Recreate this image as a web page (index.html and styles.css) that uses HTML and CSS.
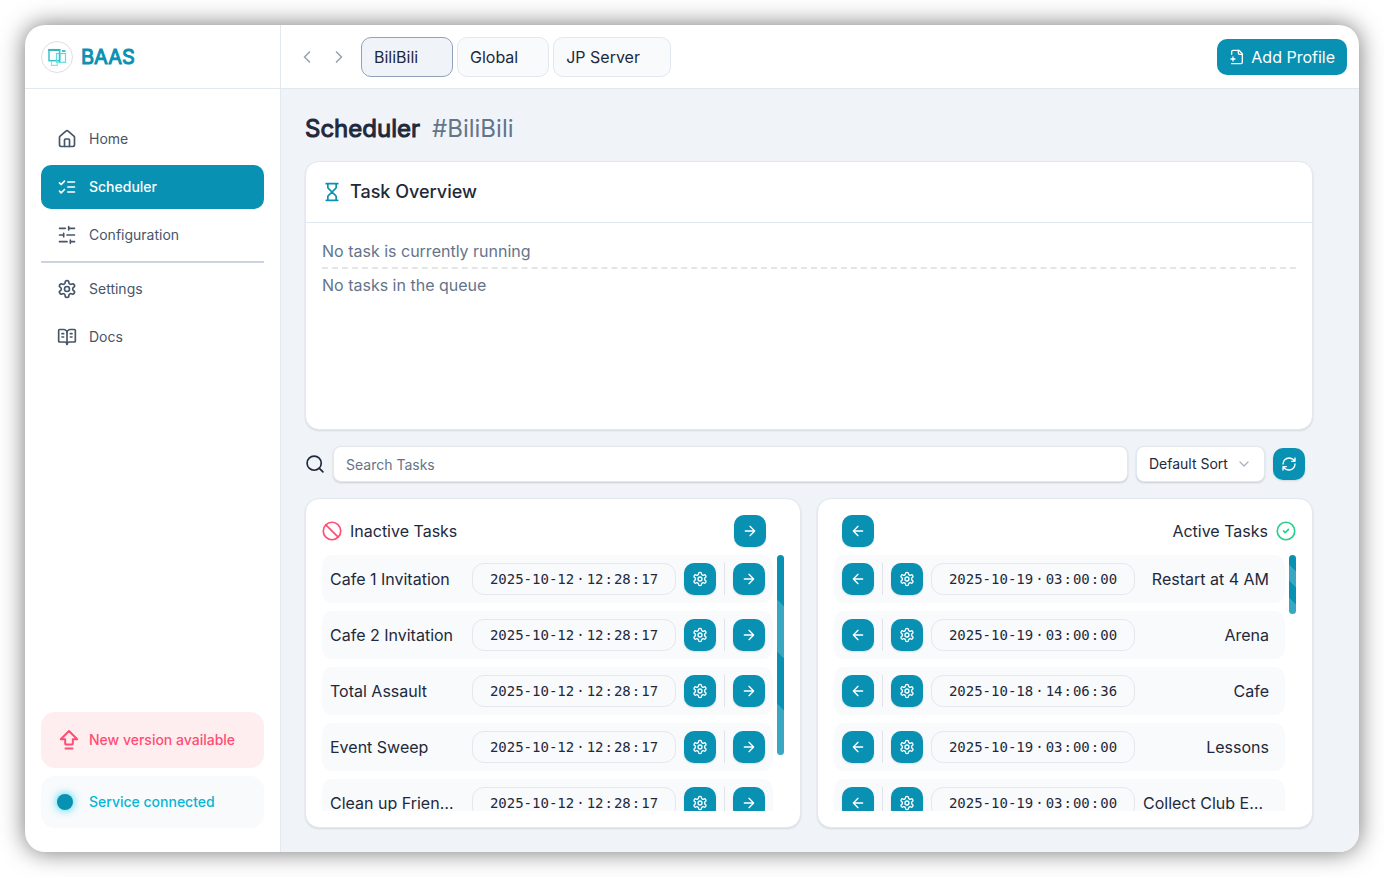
FILE: index.html
```html
<!DOCTYPE html>
<html lang="en">
<head>
<meta charset="utf-8">
<meta name="viewport" content="width=device-width, initial-scale=1">
<title>BAAS</title>
<link rel="stylesheet" href="styles.css">
</head>
<body>
<svg class="sprite" aria-hidden="true">
  <symbol id="gear" viewBox="0 0 24 24"><path d="M12.22 2h-.44a2 2 0 0 0-2 2v.18a2 2 0 0 1-1 1.73l-.43.25a2 2 0 0 1-2 0l-.15-.08a2 2 0 0 0-2.73.73l-.22.38a2 2 0 0 0 .73 2.73l.15.1a2 2 0 0 1 1 1.72v.51a2 2 0 0 1-1 1.74l-.15.09a2 2 0 0 0-.73 2.73l.22.38a2 2 0 0 0 2.73.73l.15-.08a2 2 0 0 1 2 0l.43.25a2 2 0 0 1 1 1.73V20a2 2 0 0 0 2 2h.44a2 2 0 0 0 2-2v-.18a2 2 0 0 1 1-1.73l.43-.25a2 2 0 0 1 2 0l.15.08a2 2 0 0 0 2.73-.73l.22-.39a2 2 0 0 0-.73-2.73l-.15-.08a2 2 0 0 1-1-1.74v-.5a2 2 0 0 1 1-1.74l.15-.09a2 2 0 0 0 .73-2.73l-.22-.38a2 2 0 0 0-2.73-.73l-.15.08a2 2 0 0 1-2 0l-.43-.25a2 2 0 0 1-1-1.73V4a2 2 0 0 0-2-2z"/><circle cx="12" cy="12" r="3"/></symbol>
  <symbol id="right" viewBox="0 0 24 24"><path d="M5 12h14M12 5l7 7-7 7"/></symbol>
  <symbol id="left" viewBox="0 0 24 24"><path d="M19 12H5M12 19l-7-7 7-7"/></symbol>
</svg>
<div class="window">
  <aside class="sidebar">
    <div class="brand">
      <svg class="logo" viewBox="0 0 32 32" aria-hidden="true">
        <circle cx="16" cy="16" r="15.5" fill="#fff" stroke="#dcdfe3"/>
        <g fill="none">
          <rect x="8" y="8.7" width="10.6" height="11" stroke="#3cc3c9" stroke-width="1.5"/>
          <path d="M7.3 9h12" stroke="#35b6c0" stroke-width="2"/>
          <rect x="15.5" y="12.5" width="9" height="8.8" stroke="#5cdcdc" stroke-width="1.2"/>
          <path d="M18.6 12v9" stroke="#3cc3c9" stroke-width="1.5"/>
          <path d="M10.5 20v4.3h5.8v-4" stroke="#7ceae6" stroke-width="1.2"/>
          <path d="M21 10h3.5" stroke="#43c6cc" stroke-width="1.8"/>
        </g>
      </svg>
      <span class="brand-name">BAAS</span>
    </div>
    <nav class="nav">
      <a class="nav-item" href="#home">
        <svg class="icon icon-20" viewBox="0 0 24 24"><path d="M15 21v-8a1 1 0 0 0-1-1h-4a1 1 0 0 0-1 1v8"/><path d="M3 10a2 2 0 0 1 .709-1.528l7-6a2 2 0 0 1 2.582 0l7 6A2 2 0 0 1 21 10v9a2 2 0 0 1-2 2H5a2 2 0 0 1-2-2z"/></svg>
        Home</a>
      <a class="nav-item is-active" href="#scheduler" aria-current="page">
        <svg class="icon icon-20" viewBox="0 0 24 24"><path d="m3 17 2 2 4-4M3 7l2 2 4-4M13 6h8M13 12h8M13 18h8"/></svg>
        Scheduler</a>
      <a class="nav-item" href="#configuration">
        <svg class="icon icon-20" viewBox="0 0 24 24"><path d="M21 4h-7M10 4H3M21 12h-9M8 12H3M21 20h-5M12 20H3M14 2v4M8 10v4M16 18v4"/></svg>
        Configuration</a>
      <hr class="nav-rule">
      <a class="nav-item" href="#settings">
        <svg class="icon icon-20"><use href="#gear"/></svg>
        Settings</a>
      <a class="nav-item" href="#docs">
        <svg class="icon icon-20" viewBox="0 0 24 24"><path d="M12 7v14M16 12h2M16 8h2M6 12h2M6 8h2"/><path d="M3 18a1 1 0 0 1-1-1V4a1 1 0 0 1 1-1h5a4 4 0 0 1 4 4 4 4 0 0 1 4-4h5a1 1 0 0 1 1 1v13a1 1 0 0 1-1 1h-6a3 3 0 0 0-3 3 3 3 0 0 0-3-3z"/></svg>
        Docs</a>
    </nav>
    <div class="notices">
      <button class="notice notice-update" type="button">
        <svg class="icon icon-24" viewBox="0 0 24 24"><path d="M8.5 20.4h7M12 3l-8.2 8.3h4.4v4.5q0 .7.7.7h6.2q.7 0 .7-.7v-4.5h4.4z"/></svg>
        New version available</button>
      <div class="notice notice-service" role="status"><span class="dot-box"><span class="dot"></span></span>Service connected</div>
    </div>
  </aside>

  <div class="content">
    <header class="topbar">
      <button class="step" type="button" aria-label="Previous profile"><svg class="icon icon-20" viewBox="0 0 24 24"><path d="m15 18-6-6 6-6"/></svg></button>
      <button class="step" type="button" aria-label="Next profile"><svg class="icon icon-20" viewBox="0 0 24 24"><path d="m9 18 6-6-6-6"/></svg></button>
      <div class="tabs" role="tablist">
        <button class="tab is-selected" type="button" role="tab" aria-selected="true">BiliBili</button>
        <button class="tab" type="button" role="tab" aria-selected="false">Global</button>
        <button class="tab" type="button" role="tab" aria-selected="false">JP Server</button>
      </div>
      <button class="add" type="button">
        <svg class="icon icon-16" viewBox="0 0 24 24"><path d="M4 22h14a2 2 0 0 0 2-2V7l-5-5H6a2 2 0 0 0-2 2v4"/><path d="M14 2v4a2 2 0 0 0 2 2h4M3 15h6M6 12v6"/></svg>
        Add Profile</button>
    </header>

    <main class="main">
      <h1 class="title"><span class="title-name">Scheduler</span><span class="title-tag">#BiliBili</span></h1>

      <section class="card overview">
        <h2 class="overview-head">
          <svg class="icon icon-20 accent" viewBox="0 0 24 24"><path d="M5 22h14M5 2h14M17 22v-4.172a2 2 0 0 0-.586-1.414L12 12l-4.414 4.414A2 2 0 0 0 7 17.828V22M7 2v4.172a2 2 0 0 0 .586 1.414L12 12l4.414-4.414A2 2 0 0 0 17 6.172V2"/></svg>
          Task Overview</h2>
        <div class="overview-body">
          <p class="line">No task is currently running</p>
          <p class="line">No tasks in the queue</p>
        </div>
      </section>

      <div class="filters">
        <label class="search-label" for="search" aria-label="Search tasks"><svg class="icon icon-20" viewBox="0 0 24 24"><circle cx="11" cy="11" r="8.5"/><path d="m21.5 21.5-4.3-4.3"/></svg></label>
        <input class="search" id="search" type="search" placeholder="Search Tasks">
        <div class="sort">
          <select class="sort-select" aria-label="Sort order"><option>Default Sort</option></select>
          <svg class="icon icon-16 sort-arrow" viewBox="0 0 24 24"><path d="m6 9 6 6 6-6"/></svg>
        </div>
        <button class="square" type="button" aria-label="Refresh"><svg class="icon icon-16" viewBox="0 0 24 24"><path d="M3 12a9 9 0 0 1 9-9 9.75 9.75 0 0 1 6.74 2.74L21 8M21 3v5h-5M21 12a9 9 0 0 1-9 9 9.75 9.75 0 0 1-6.74-2.74L3 16M8 16H3v5"/></svg></button>
      </div>

      <div class="panels">
        <section class="card panel">
          <div class="panel-head">
            <svg class="icon icon-20 danger" viewBox="0 0 24 24"><circle cx="12" cy="12" r="10.5"/><path d="m4.6 4.6 14.8 14.8"/></svg>
            <h3 class="panel-title">Inactive Tasks</h3>
            <button class="square head-right" type="button" aria-label="Activate all"><svg class="icon icon-16"><use href="#right"/></svg></button>
          </div>
          <div class="scroller">
            <ul class="list">
              <li class="task"><span class="name">Cafe 1 Invitation</span><button class="when" type="button"><span>2025-10-12</span><span>·</span><span class="clock">12<i>:</i>28<i>:</i>17</span></button><button class="square" type="button" aria-label="Configure"><svg class="icon icon-16"><use href="#gear"/></svg></button><span class="bar"></span><button class="square" type="button" aria-label="Activate"><svg class="icon icon-16"><use href="#right"/></svg></button></li>
              <li class="task"><span class="name">Cafe 2 Invitation</span><button class="when" type="button"><span>2025-10-12</span><span>·</span><span class="clock">12<i>:</i>28<i>:</i>17</span></button><button class="square" type="button" aria-label="Configure"><svg class="icon icon-16"><use href="#gear"/></svg></button><span class="bar"></span><button class="square" type="button" aria-label="Activate"><svg class="icon icon-16"><use href="#right"/></svg></button></li>
              <li class="task"><span class="name">Total Assault</span><button class="when" type="button"><span>2025-10-12</span><span>·</span><span class="clock">12<i>:</i>28<i>:</i>17</span></button><button class="square" type="button" aria-label="Configure"><svg class="icon icon-16"><use href="#gear"/></svg></button><span class="bar"></span><button class="square" type="button" aria-label="Activate"><svg class="icon icon-16"><use href="#right"/></svg></button></li>
              <li class="task"><span class="name">Event Sweep</span><button class="when" type="button"><span>2025-10-12</span><span>·</span><span class="clock">12<i>:</i>28<i>:</i>17</span></button><button class="square" type="button" aria-label="Configure"><svg class="icon icon-16"><use href="#gear"/></svg></button><span class="bar"></span><button class="square" type="button" aria-label="Activate"><svg class="icon icon-16"><use href="#right"/></svg></button></li>
              <li class="task"><span class="name">Clean up Friend List</span><button class="when" type="button"><span>2025-10-12</span><span>·</span><span class="clock">12<i>:</i>28<i>:</i>17</span></button><button class="square" type="button" aria-label="Configure"><svg class="icon icon-16"><use href="#gear"/></svg></button><span class="bar"></span><button class="square" type="button" aria-label="Activate"><svg class="icon icon-16"><use href="#right"/></svg></button></li>
            </ul>
            <div class="thumb thumb-long"></div>
          </div>
        </section>

        <section class="card panel">
          <div class="panel-head">
            <button class="square head-left" type="button" aria-label="Deactivate all"><svg class="icon icon-16"><use href="#left"/></svg></button>
            <h3 class="panel-title">Active Tasks</h3>
            <svg class="icon icon-20 success" viewBox="0 0 24 24"><circle cx="12" cy="12" r="10.5"/><path d="m9 12 2 2 4-4"/></svg>
          </div>
          <div class="scroller scroller-active">
            <ul class="list">
              <li class="task"><button class="square" type="button" aria-label="Deactivate"><svg class="icon icon-16"><use href="#left"/></svg></button><span class="bar"></span><button class="square" type="button" aria-label="Configure"><svg class="icon icon-16"><use href="#gear"/></svg></button><button class="when" type="button"><span>2025-10-19</span><span>·</span><span class="clock">03<i>:</i>00<i>:</i>00</span></button><span class="name">Restart at 4 AM</span></li>
              <li class="task"><button class="square" type="button" aria-label="Deactivate"><svg class="icon icon-16"><use href="#left"/></svg></button><span class="bar"></span><button class="square" type="button" aria-label="Configure"><svg class="icon icon-16"><use href="#gear"/></svg></button><button class="when" type="button"><span>2025-10-19</span><span>·</span><span class="clock">03<i>:</i>00<i>:</i>00</span></button><span class="name">Arena</span></li>
              <li class="task"><button class="square" type="button" aria-label="Deactivate"><svg class="icon icon-16"><use href="#left"/></svg></button><span class="bar"></span><button class="square" type="button" aria-label="Configure"><svg class="icon icon-16"><use href="#gear"/></svg></button><button class="when" type="button"><span>2025-10-18</span><span>·</span><span class="clock">14<i>:</i>06<i>:</i>36</span></button><span class="name">Cafe</span></li>
              <li class="task"><button class="square" type="button" aria-label="Deactivate"><svg class="icon icon-16"><use href="#left"/></svg></button><span class="bar"></span><button class="square" type="button" aria-label="Configure"><svg class="icon icon-16"><use href="#gear"/></svg></button><button class="when" type="button"><span>2025-10-19</span><span>·</span><span class="clock">03<i>:</i>00<i>:</i>00</span></button><span class="name">Lessons</span></li>
              <li class="task"><button class="square" type="button" aria-label="Deactivate"><svg class="icon icon-16"><use href="#left"/></svg></button><span class="bar"></span><button class="square" type="button" aria-label="Configure"><svg class="icon icon-16"><use href="#gear"/></svg></button><button class="when" type="button"><span>2025-10-19</span><span>·</span><span class="clock">03<i>:</i>00<i>:</i>00</span></button><span class="name">Collect Club Energy</span></li>
            </ul>
            <div class="thumb thumb-short"></div>
          </div>
        </section>
      </div>
    </main>
  </div>
</div>
</body>
</html>
```
FILE: styles.css
```css
:root {
  --accent: #0891b2;
  --ink: #1e293b;
  --muted: #64748b;
  --line: #e2e8f0;
  --soft: #f8fafc;
  --page: #f0f4f9;
}

* { box-sizing: border-box; }

body {
  margin: 0;
  height: 100vh;
  padding: 25px;
  display: flex;
  background: #fff;
  color: var(--ink);
  font: 16px/24px Inter, "Noto Sans", sans-serif;
}

button, input, select { font: inherit; color: inherit; margin: 0; }
button { border: 0; cursor: pointer; }
h1, h2, h3, p, ul { margin: 0; padding: 0; }

.sprite { display: none; }

.icon {
  flex: none;
  fill: none;
  stroke: currentColor;
  stroke-width: 2;
  stroke-linecap: round;
  stroke-linejoin: round;
}
.icon-16 { width: 16px; height: 16px; }
.icon-20 { width: 20px; height: 20px; }
.icon-24 { width: 24px; height: 24px; }
.accent { color: var(--accent); }
.danger { color: #ff4d74; }
.success { color: #28cf8d; }

.window {
  flex: 1;
  min-width: 0;
  display: flex;
  overflow: hidden;
  border-radius: 20px;
  background: #fff;
  box-shadow: 0 0 24px rgba(0, 0, 0, .55);
}

/* Sidebar */
.sidebar {
  flex: none;
  width: 256px;
  display: flex;
  flex-direction: column;
  border-right: 1px solid var(--line);
}
.brand {
  height: 64px;
  padding: 0 16px;
  display: flex;
  align-items: center;
  gap: 8px;
  border-bottom: 1px solid var(--line);
}
.logo { width: 32px; height: 32px; }
.brand-name { font-size: 20px; font-weight: 400; color: var(--accent); -webkit-text-stroke: 1px currentColor; }
.nav {
  flex: 1;
  padding: 28px 16px;
  display: flex;
  flex-direction: column;
  gap: 4px;
}
.nav-item {
  height: 44px;
  padding: 0 16px;
  display: flex;
  align-items: center;
  gap: 12px;
  border-radius: 10px;
  color: #475569;
  font-size: 14px;
  text-decoration: none;
}
.nav-item.is-active { background: var(--accent); color: #fff; font-weight: 500; }
.nav-rule { width: 100%; height: 2px; margin: 0; border: 0; background: #cbd5e1; }
.notices {
  padding: 0 16px 24px;
  display: flex;
  flex-direction: column;
  gap: 8px;
}
.notice {
  padding: 16px;
  display: flex;
  align-items: center;
  gap: 8px;
  border-radius: 14px;
  font-size: 14px;
  font-weight: 500;
  line-height: 20px;
}
.notice-update { background: #ffeef0; color: #ff4d74; }
.notice-service { background: var(--soft); color: #06b6d4; }
.dot-box { width: 24px; display: flex; }
.dot {
  width: 16px;
  height: 16px;
  border-radius: 50%;
  background: var(--accent);
  box-shadow: 0 0 8px #22d3ee;
}

/* Top bar */
.content { flex: 1; min-width: 0; display: flex; flex-direction: column; }
.topbar {
  flex: none;
  height: 64px;
  padding: 0 12px 0 16px;
  display: flex;
  align-items: center;
  gap: 12px;
  border-bottom: 1px solid var(--line);
}
.step { padding: 0; display: flex; background: none; color: #9ca3af; }
.tabs { display: flex; gap: 4px; }
.tab {
  height: 40px;
  min-width: 92px;
  padding: 0 30px 0 12px;
  border: 1px solid var(--line);
  border-radius: 10px;
  background: var(--soft);
  text-align: left;
}
.tab.is-selected { border-color: #8fa1bb; background: var(--page); }
.add {
  height: 36px;
  margin-left: auto;
  padding: 0 12px;
  display: flex;
  align-items: center;
  gap: 6px;
  border-radius: 10px;
  background: var(--accent);
  color: #fff;
}

/* Main area */
.main {
  flex: 1;
  min-height: 0;
  padding: 24px 46px 24px 24px;
  display: flex;
  flex-direction: column;
  gap: 16px;
  background: var(--page);
}
.title { display: flex; gap: 12px; font-size: 24px; font-weight: 400; line-height: 32px; }
.title-name { -webkit-text-stroke: 1px currentColor; }
.title-tag { color: var(--muted); }
.card {
  border: 1px solid var(--line);
  border-radius: 14px;
  background: #fff;
  box-shadow: 0 1px 2px rgba(15, 23, 42, .12);
}
.overview { flex: none; height: 269px; }
.overview-head {
  padding: 16px;
  display: flex;
  align-items: center;
  gap: 8px;
  border-bottom: 1px solid var(--line);
  font-size: 18px;
  font-weight: 500;
  line-height: 28px;
}
.overview-body { padding: 16px; color: var(--muted); }
.line + .line { margin-top: 4px; padding-top: 4px; border-top: 2px dashed #e5e5e5; }

.filters { flex: none; padding-right: 8px; display: flex; align-items: center; gap: 8px; }
.search-label { display: flex; }
.search {
  flex: 1;
  min-width: 0;
  height: 36px;
  padding: 0 12px;
  appearance: none;
  border: 1px solid var(--line);
  border-radius: 8px;
  background: #fff;
  box-shadow: 0 1px 2px rgba(0, 0, 0, .16);
  font-size: 14px;
  line-height: 20px;
}
.search::placeholder { color: var(--muted); opacity: 1; }
.sort { position: relative; display: flex; }
.sort-select {
  width: 129px;
  height: 36px;
  padding: 0 12px;
  appearance: none;
  border: 1px solid var(--line);
  border-radius: 8px;
  background: #fff;
  box-shadow: 0 1px 2px rgba(0, 0, 0, .16);
  font-size: 14px;
}
.sort-arrow { position: absolute; top: 10px; right: 13px; color: #a9b4c4; pointer-events: none; }
.square {
  flex: none;
  width: 32px;
  height: 32px;
  padding: 0;
  display: flex;
  align-items: center;
  justify-content: center;
  border-radius: 10px;
  background: var(--accent);
  color: #fff;
  box-shadow: 0 1px 2px rgba(0, 0, 0, .12);
}

/* Task panels */
.panels {
  flex: 1;
  min-height: 0;
  display: grid;
  grid-template-columns: 1fr 1fr;
  gap: 16px;
}
.panel {
  min-width: 0;
  min-height: 0;
  padding: 16px;
  display: flex;
  flex-direction: column;
  gap: 8px;
}
.panel-head { flex: none; display: flex; align-items: center; gap: 8px; }
.panel-title { font-size: 16px; font-weight: 400; }
.head-right { margin-left: auto; margin-right: 18px; }
.head-left { margin-left: 8px; margin-right: auto; }
.scroller { flex: 1; min-height: 0; display: flex; align-items: flex-start; gap: 4px; overflow: hidden; }
.list { flex: 1; min-width: 0; list-style: none; display: flex; flex-direction: column; gap: 8px; }
.task {
  height: 48px;
  padding: 8px;
  display: flex;
  align-items: center;
  gap: 8px;
  border-radius: 10px;
  background: var(--soft);
}
.name {
  flex: 1;
  min-width: 0;
  margin-right: 8px;
  overflow: hidden;
  text-overflow: ellipsis;
  white-space: nowrap;
}
.scroller-active .name { text-align: right; }
.when {
  flex: none;
  width: 204px;
  height: 32px;
  padding: 0;
  display: flex;
  align-items: center;
  justify-content: center;
  gap: 2px;
  border: 1px solid #e5e7eb;
  border-radius: 12px;
  background: var(--soft);
  font: 14px/20px "DejaVu Sans Mono", monospace;
}
.clock { display: flex; }
.clock i { padding: 0 1px; font-style: normal; }
.bar { flex: none; width: 1px; height: 32px; background: #e2e4e8; }
.thumb {
  flex: none;
  width: 7px;
  border-radius: 4px;
  background: linear-gradient(45deg, #39a7c1 25%, var(--accent) 25% 50%, #39a7c1 50% 75%, var(--accent) 75%);
}
.thumb-long { height: 200px; }
.thumb-short { height: 59px; }
```
